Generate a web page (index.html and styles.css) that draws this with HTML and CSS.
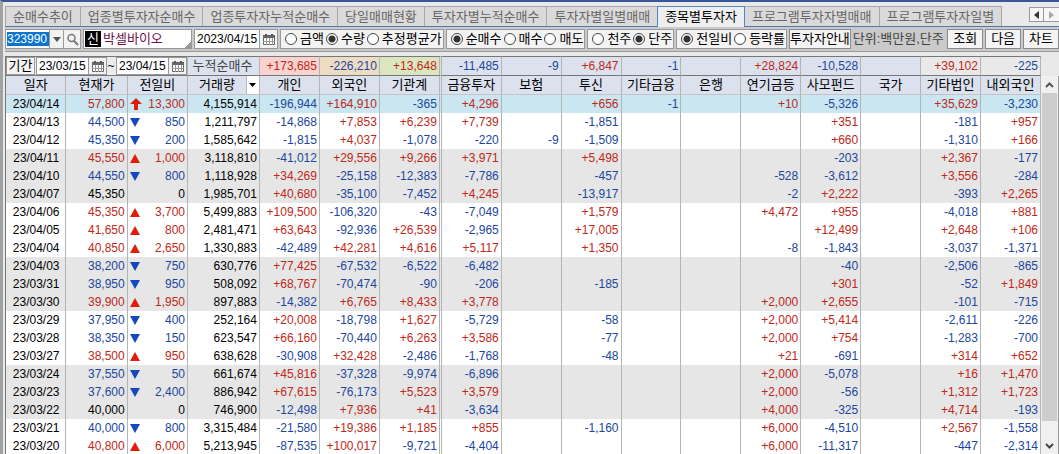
FILE: index.html
```
<!DOCTYPE html>
<html lang="ko">
<head>
<meta charset="utf-8">
<title>종목별투자자</title>
<link rel="stylesheet" href="styles.css">
</head>
<body>
<svg class="defs" aria-hidden="true">
  <symbol id="cal" viewBox="0 0 12 11"><path d="M0.5 1.5h11v9h-11z" fill="#fff" stroke="#666"/><path d="M0 1h12v3H0z" fill="#666"/><path d="M2 0h2v2H2zM8 0h2v2H8z" fill="#555"/><path d="M0 7.500h12M3.500 4v7M6.500 4v7M9.500 4v7" stroke="#999" fill="none"/></symbol>
  <symbol id="up" viewBox="0 0 10 9"><path d="M5 0L10 9H0z" fill="#e01c0c"/></symbol>
  <symbol id="down" viewBox="0 0 10 9"><path d="M0 0H10L5 9z" fill="#1448c0"/></symbol>
  <symbol id="limit" viewBox="0 0 12 12"><path d="M6 0L12 6H8V12H4V6H0z" fill="#e01c0c"/></symbol>
</svg>
<div class="window">
  <nav class="tabs">
    <button class="tab">순매수추이</button>
    <button class="tab">업종별투자자순매수</button>
    <button class="tab">업종투자자누적순매수</button>
    <button class="tab">당일매매현황</button>
    <button class="tab">투자자별누적순매수</button>
    <button class="tab">투자자별일별매매</button>
    <button class="tab active">종목별투자자</button>
    <button class="tab">프로그램투자자별매매</button>
    <button class="tab">프로그램투자자일별</button>
    <span class="tab-end"></span>
    <span class="tab-scroll">
      <button aria-label="이전 탭"><svg width="5" height="8" viewBox="0 0 5 8"><path d="M5 0V8L0 4z" fill="#333"/></svg></button>
      <button aria-label="다음 탭"><svg width="5" height="8" viewBox="0 0 5 8"><path d="M0 0V8L5 4z" fill="#aaa"/></svg></button>
    </span>
  </nav>

  <form class="toolbar">
    <div class="box code">
      <input class="code-input" aria-label="종목코드" value="323990">
      <button type="button" class="drop" aria-label="종목 목록"><svg width="8" height="5" viewBox="0 0 8 5"><path d="M0 0H8L4 5z" fill="#555"/></svg></button>
      <button type="button" class="find" aria-label="종목 검색"><svg width="13" height="13" viewBox="0 0 13 13"><circle cx="5.500" cy="5" r="3.500" fill="none" stroke="#777" stroke-width="1.500"/><path d="M8 8L12 12" stroke="#777" stroke-width="2"/></svg></button>
    </div>
    <div class="box stock"><b class="badge">신</b><span class="stock-name">박셀바이오</span></div>
    <div class="box date">
      <input class="date-input" aria-label="기준일" value="2023/04/15">
      <button type="button" class="cal" aria-label="달력"><svg width="12" height="11"><use href="#cal"/></svg></button>
    </div>
    <div class="box radios">
      <label><input type="radio" name="unit">금액</label>
      <label><input type="radio" name="unit" checked>수량</label>
      <label><input type="radio" name="unit">추정평균가</label>
    </div>
    <div class="box radios">
      <label><input type="radio" name="side" checked>순매수</label>
      <label><input type="radio" name="side">매수</label>
      <label><input type="radio" name="side">매도</label>
    </div>
    <div class="box radios">
      <label><input type="radio" name="lot">천주</label>
      <label><input type="radio" name="lot" checked>단주</label>
    </div>
    <div class="box radios">
      <label><input type="radio" name="diff" checked>전일비</label>
      <label><input type="radio" name="diff">등락률</label>
    </div>
    <button type="button" class="btn guide">투자자안내</button>
    <span class="note">단위:백만원,단주</span>
    <button type="button" class="btn">조회</button>
    <button type="button" class="btn">다음</button>
    <button type="button" class="btn">차트</button>
  </form>

  <main class="panel">
    <table class="grid">
      <colgroup>
        <col class="w60"><col class="w61"><col class="w60"><col class="w72"><col class="w60"><col class="w60"><col class="w62">
        <col class="w60" span="10">
      </colgroup>
      <thead>
        <tr class="sum">
          <td colspan="3" class="period">
            <div class="period-row">
              <button type="button" class="btn period-btn">기간</button>
              <span class="range"><input class="date-input" aria-label="시작일" value="23/03/15"><button type="button" class="cal" aria-label="시작일 달력"><svg width="12" height="11"><use href="#cal"/></svg></button></span>
              <span class="tilde">~</span>
              <span class="range"><input class="date-input" aria-label="종료일" value="23/04/15"><button type="button" class="cal" aria-label="종료일 달력"><svg width="12" height="11"><use href="#cal"/></svg></button></span>
            </div>
          </td>
          <td class="caption">누적순매수</td>
          <td class="plus pink">+173,685</td><td class="minus tan">-226,210</td><td class="plus green split">+13,648</td>
          <td class="minus">-11,485</td><td class="minus">-9</td><td class="plus">+6,847</td><td class="minus">-1</td><td></td>
          <td class="plus">+28,824</td><td class="minus">-10,528</td><td></td><td class="plus plain">+39,102</td><td class="minus plain">-225</td>
        </tr>
        <tr class="head">
          <th>일자</th><th>현재가</th><th>전일비</th>
          <th><div class="sortable"><span>거래량</span><button type="button" aria-label="열 선택"><svg width="7" height="4" viewBox="0 0 7 4"><path d="M0 0H7L3.500 4z" fill="#000"/></svg></button></div></th>
          <th class="pink">개인</th><th class="tan">외국인</th><th class="green split">기관계</th>
          <th>금융투자</th><th>보험</th><th>투신</th><th>기타금융</th><th>은행</th><th>연기금등</th><th>사모펀드</th><th>국가</th>
          <th class="plain">기타법인</th><th class="plain">내외국인</th>
        </tr>
      </thead>
      <tbody id="rows"></tbody>
    </table>
    <div class="scroll" aria-hidden="true">
      <div class="scroll-btn"><svg width="9" height="6" viewBox="0 0 9 6"><path d="M1 5L4.500 1.500L8 5" fill="none" stroke="#555" stroke-width="2"/></svg></div>
      <div class="thumb"></div>
      <div class="track"></div>
      <div class="scroll-btn"><svg width="9" height="6" viewBox="0 0 9 6"><path d="M1 1L4.500 4.500L8 1" fill="none" stroke="#444" stroke-width="2"/></svg></div>
    </div>
  </main>
</div>
<script src="app.js"></script>
</body>
</html>
```
FILE: styles.css
```
* { box-sizing: border-box; }
body {
  margin: 0;
  height: 100vh;
  overflow: hidden;
  background: #e9e9e9;
  color: #000;
  font: 12px/18px "Liberation Sans", "Noto Sans CJK KR", sans-serif;
}
button, input { font: inherit; color: inherit; margin: 0; padding: 0; border-radius: 0; }
svg { display: block; flex: none; }
.defs { position: absolute; width: 0; height: 0; }
.window {
  display: flex;
  flex-direction: column;
  height: 100%;
  border-top: 2px solid #38569a;
  padding-top: 4px;
  padding-left: 2px;
  border-left: 3px solid #a2a2a2;
}

.tabs { display: flex; height: 21px; border-bottom: 1px solid #4f7ab5; font-size: 13px; }
.tab {
  flex: none;
  border: 0;
  border-top: 1px solid #a8a8a8;
  border-left: 1px solid #a8a8a8;
  padding: 0 7px;
  background: #dadada;
  color: #666;
  line-height: 18px;
  white-space: nowrap;
}
.tab.active {
  border: 1px solid #4f86c8;
  border-bottom: 0;
  margin-bottom: -1px;
  background: #eee;
  color: #000;
}
.tab.active + .tab { border-left: 0; }
.tab-end { border-left: 1px solid #a8a8a8; }
.tab-scroll { display: flex; margin-left: auto; height: 15px; margin-top: 1px; }
.tab-scroll button {
  display: flex; align-items: center; justify-content: center;
  width: 15px; background: #f6f6f6; border: 1px solid #999;
}
.tab-scroll button + button { border-left: 0; border-right: 0; }

.toolbar {
  display: flex;
  flex: none;
  align-items: center;
  gap: 2px;
  height: 25px;
  overflow: hidden;
  background: #cacaca;
  border-bottom: 1px solid #999;
  font-size: 13px;
}
.box { display: flex; flex: none; align-items: center; height: 20px; border: 1px solid #999; background: #fff; }
.code { width: 76px; padding-left: 1px; }
.code-input {
  flex: 1; min-width: 0; height: 14px; border: 0;
  background: #0a74cf; color: #fff; font-size: 12px; line-height: 14px;
}
.drop, .find {
  display: flex; align-items: center; justify-content: center;
  height: 18px; background: #f2f2f2; border: 0; border-left: 1px solid #999;
}
.drop { width: 14px; }
.find { width: 17px; }
.stock {
  width: 109px; padding-left: 1px; gap: 2px;
  background: linear-gradient(135deg, transparent 50%, #999 50%) right bottom / 7px 7px no-repeat #fff;
}
.badge { width: 16px; height: 16px; background: #000; color: #fff; font-weight: 400; line-height: 16px; text-align: center; }
.stock-name { color: #701048; }
.date-input { flex: 1; min-width: 0; width: 51px; height: 16px; border: 0; padding-left: 2px; background: #fff; font-size: 12px; }
.date { width: 84px; }
.cal {
  display: flex; flex: none; align-items: center; justify-content: center;
  width: 18px; height: 18px; border: 0; border-left: 1px solid #999; background: #f2f2f2;
}
.radios { gap: 2px; padding: 0 1px 0 4px; background: #f3f3f3; }
.radios label { display: flex; align-items: center; gap: 3px; white-space: nowrap; }
.radios input {
  appearance: none;
  width: 12px; height: 12px;
  border: 1px solid #444; border-radius: 50%;
  background: #fff;
}
.radios input:checked { background: radial-gradient(circle, #333 0 3px, #fff 4px); }
.btn {
  flex: none; height: 20px; padding: 0 5px; border: 1px solid #8a8a8a; background: #f4f4f4;
  line-height: 18px; white-space: nowrap;
}
.guide { padding: 0; }
.note { flex: 1 0 auto; color: #444; white-space: nowrap; }

.panel { display: flex; flex: 1; min-height: 0; margin-top: 4px; }
.grid { flex: 1; border-collapse: separate; border-spacing: 0; table-layout: fixed; border-left: 1px solid #777; align-self: flex-start; background: #fff; }
.w60 { width: 60px; } .w61 { width: 61px; } .w62 { width: 62px; } .w72 { width: 72px; }
.grid td, .grid th { height: 18px; padding: 0 2px 0 0; border-right: 1px solid #b4b4b4; line-height: 18px; white-space: nowrap; text-align: right; overflow: hidden; }
.sum td { height: 20px; border-top: 1px solid #777; border-bottom: 1px solid #777; background: #dbe2ee; }
.grid .head th { height: 19px; padding: 0; border-bottom: 1px solid #c4c4c4; background: #dbe2ee; font-size: 13px; font-weight: 400; text-align: center; }
.grid .pink { background: #f9d3cf; }
.grid .tan { background: #eedcc2; }
.grid .green { background: #dbe6c0; }
.grid .plain { background: #e9e9e9; }
.grid .split { border-right: 3px double #b4b4b4; }
.grid .caption { color: #444; font-size: 13px; text-align: center; }
.grid .period { padding: 0; background: #ececec; }
.period-row { display: flex; align-items: center; height: 18px; }
.period-btn { width: 29px; height: 18px; padding: 0; border-color: #999; font-size: 13px; line-height: 16px; text-align: center; }
.range { display: flex; flex: 1; align-items: center; height: 18px; border: 1px solid #999; background: #fff; margin-left: 1px; }
.range .cal { height: 16px; }
.tilde { width: 8px; text-align: center; }
.sortable { display: flex; align-items: center; height: 18px; }
.sortable span { flex: 1; }
.sortable button { display: flex; align-items: center; justify-content: center; width: 13px; height: 18px; border: 0; border-left: 1px solid #bbb; background: #fff; }

.plus { color: #c02818; }
.minus { color: #1c46a0; }
.grid .day { padding: 0 0 0 1px; text-align: center; }
.shade td { background: #e6e6e6; }
.today td { background: #c9e6f1; }
.diff { display: flex; align-items: center; justify-content: space-between; height: 18px; padding-left: 2px; }
.diff span { flex: 1; }

.scroll { display: flex; flex: none; flex-direction: column; width: 18px; margin-top: 20px; border-right: 1px solid #999; background: #f0f0f0; }
.scroll-btn { display: flex; flex: none; align-items: center; justify-content: center; height: 17px; }
.thumb { flex: 21; width: 15px; margin-left: 1px; background: #cdcdcd; }
.track { flex: 1; }
```
FILE: app.js
```
// date | price | direction (^ limit, + up, - down, = flat) | change | volume | investor columns
const data = `
23/04/14|57,800|^|13,300|4,155,914|-196,944|+164,910|-365|+4,296||+656|-1||+10|-5,326||+35,629|-3,230
23/04/13|44,500|-|850|1,211,797|-14,868|+7,853|+6,239|+7,739||-1,851||||+351||-181|+957
23/04/12|45,350|-|200|1,585,642|-1,815|+4,037|-1,078|-220|-9|-1,509||||+660||-1,310|+166
23/04/11|45,550|+|1,000|3,118,810|-41,012|+29,556|+9,266|+3,971||+5,498||||-203||+2,367|-177
23/04/10|44,550|-|800|1,118,928|+34,269|-25,158|-12,383|-7,786||-457|||-528|-3,612||+3,556|-284
23/04/07|45,350|=|0|1,985,701|+40,680|-35,100|-7,452|+4,245||-13,917|||-2|+2,222||-393|+2,265
23/04/06|45,350|+|3,700|5,499,883|+109,500|-106,320|-43|-7,049||+1,579|||+4,472|+955||-4,018|+881
23/04/05|41,650|+|800|2,481,471|+63,643|-92,936|+26,539|-2,965||+17,005||||+12,499||+2,648|+106
23/04/04|40,850|+|2,650|1,330,883|-42,489|+42,281|+4,616|+5,117||+1,350|||-8|-1,843||-3,037|-1,371
23/04/03|38,200|-|750|630,776|+77,425|-67,532|-6,522|-6,482||||||-40||-2,506|-865
23/03/31|38,950|-|950|508,092|+68,767|-70,474|-90|-206||-185||||+301||-52|+1,849
23/03/30|39,900|+|1,950|897,883|-14,382|+6,765|+8,433|+3,778|||||+2,000|+2,655||-101|-715
23/03/29|37,950|-|400|252,164|+20,008|-18,798|+1,627|-5,729||-58|||+2,000|+5,414||-2,611|-226
23/03/28|38,350|-|150|623,547|+66,160|-70,440|+6,263|+3,586||-77|||+2,000|+754||-1,283|-700
23/03/27|38,500|+|950|638,628|-30,908|+32,428|-2,486|-1,768||-48|||+21|-691||+314|+652
23/03/24|37,550|-|50|661,674|+45,816|-37,328|-9,974|-6,896|||||+2,000|-5,078||+16|+1,470
23/03/23|37,600|-|2,400|886,942|+67,615|-76,173|+5,523|+3,579|||||+2,000|-56||+1,312|+1,723
23/03/22|40,000|=|0|746,900|-12,498|+7,936|+41|-3,634|||||+4,000|-325||+4,714|-193
23/03/21|40,000|-|800|3,315,484|-21,580|+19,386|+1,185|+855||-1,160|||+6,000|-4,510||+2,567|-1,558
23/03/20|40,800|+|6,000|5,213,945|-87,535|+100,017|-9,721|-4,404|||||+6,000|-11,317||-447|-2,314`;

const icons = {
  '^': '<svg width="12" height="12"><use href="#limit"/></svg>',
  '+': '<svg width="10" height="9"><use href="#up"/></svg>',
  '-': '<svg width="10" height="9"><use href="#down"/></svg>',
  '=': ''
};
const tone = s => /^[+^]/.test(s) ? 'plus' : s[0] === '-' ? 'minus' : '';

document.getElementById('rows').innerHTML = data.trim().split('\n').map((line, i) => {
  const [day, price, dir, change, volume, ...flows] = line.split('|');
  const row = i === 0 ? 'today' : Math.floor(i / 3) % 2 ? 'shade' : '';
  return `<tr class="${row}"><td class="day">${day}</td><td class="${tone(dir)}">${price}</td>` +
    `<td class="${tone(dir)}"><div class="diff">${icons[dir]}<span>${change}</span></div></td><td>${volume}</td>` +
    flows.map((v, k) => `<td class="${tone(v)}${k === 2 ? ' split' : ''}">${v}</td>`).join('') + '</tr>';
}).join('');
```
